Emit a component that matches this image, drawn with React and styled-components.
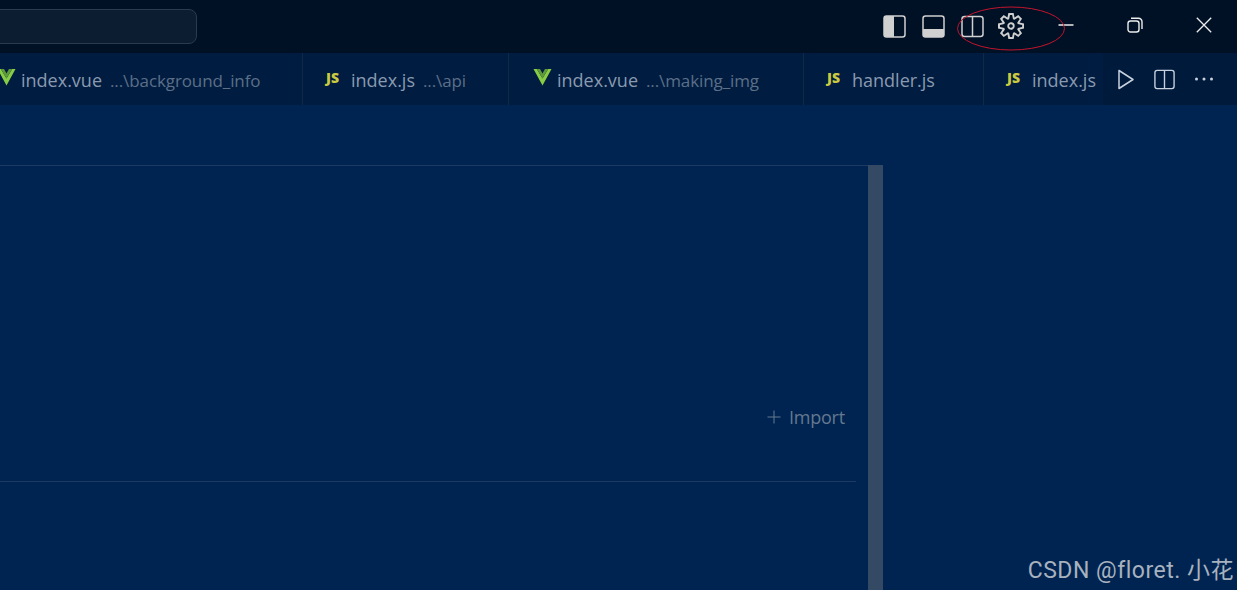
import styled, { createGlobalStyle } from "styled-components";
import { VscSettingsGear, VscEllipsis } from "react-icons/vsc";

const GlobalStyle = createGlobalStyle`
  html, body {
    margin: 0;
    padding: 0;
    height: 100%;
    overflow: hidden;
    background: #002451;
  }
  #root {
    height: 100%;
  }
`;

const Page = styled.div`
  position: relative;
  height: 590px;
  display: flex;
  flex-direction: column;
  overflow: hidden;
  background: #002451;
  font-family: "Open Sans", "Noto Sans", sans-serif;
`;

const TitleBar = styled.div`
  height: 53px;
  flex: none;
  display: flex;
  align-items: center;
  background: #001126;
`;

const SearchBox = styled.div`
  width: 215px;
  height: 33px;
  margin: -1px 0 0 -20px;
  border: 1px solid #2b3a4f;
  border-radius: 8px;
  background: #0c1c31;
`;

const LayoutIcons = styled.div`
  margin-left: auto;
  display: flex;
  color: #d0d0d0;
`;

const LayoutButton = styled.div`
  width: 39px;
  height: 53px;
  display: flex;
  align-items: center;
  justify-content: center;
  padding-bottom: ${({ $lift }) => ($lift ? "2px" : "0")};
  padding-right: ${({ $lift }) => ($lift ? "1px" : "0")};
  box-sizing: border-box;
`;

const WindowControls = styled.div`
  margin-right: -1px;
  display: flex;
  color: #ededed;
`;

const WindowButton = styled.div`
  width: 69px;
  height: 53px;
  box-sizing: border-box;
  padding-bottom: 3px;
  display: flex;
  align-items: center;
  justify-content: center;
`;

const TabRow = styled.div`
  height: 52px;
  flex: none;
  display: flex;
  background: #001c40;
`;

const TabList = styled.div`
  flex: 1;
  min-width: 0;
  display: flex;
  overflow: hidden;
  margin-left: -27px;
`;

const Tab = styled.div`
  width: ${({ $width }) => $width}px;
  flex: none;
  box-sizing: border-box;
  display: flex;
  align-items: center;
  padding: 2px 0 0 23px;
  border-right: 1px solid #0f2a47;
  font-size: 18px;
  white-space: nowrap;
`;

const TabName = styled.span`
  color: #8a9ab0;
`;

const TabPath = styled.span`
  margin-left: 8px;
  color: #5c6f88;
  font-size: 17px;
  letter-spacing: -0.1px;
`;

const JsBadge = styled.span`
  width: 25px;
  margin-top: -4px;
  color: #cbcb41;
  font-size: 14px;
  line-height: 1;
  font-weight: 800;
`;

const VueMark = styled.svg`
  width: 19px;
  height: 17px;
  margin: -5px 5px 0 1px;
  flex: none;
`;

const TabActions = styled.div`
  width: 134px;
  flex: none;
  display: flex;
  align-items: center;
  background: #001a3c;
  color: #c8d2de;
`;

const ActionButton = styled.div`
  width: 39px;
  height: 52px;
  display: flex;
  align-items: center;
  justify-content: center;
  margin-left: ${({ $first }) => ($first ? "3px" : "0")};
`;

const Editor = styled.div`
  flex: 1;
  padding-top: 60px;
  display: flex;
`;

const Panel = styled.div`
  width: 868px;
  box-sizing: border-box;
  border-top: 1px solid #1e3a61;
  padding-right: 12px;
  display: flex;
  flex-direction: column;
`;

const ImportRow = styled.div`
  margin-top: 238px;
  height: 26px;
  display: flex;
  align-items: center;
  justify-content: flex-end;
  gap: 8px;
  color: #65788f;
  font-size: 18px;
  letter-spacing: -0.2px;
  padding-right: 11px;
`;

const Divider = styled.div`
  margin-top: 51px;
  height: 1px;
  background: #1e3a61;
`;

const ScrollBar = styled.div`
  width: 15px;
  background: #344a64;
`;

const Annotation = styled.svg`
  position: absolute;
  left: 952px;
  top: 4px;
  width: 118px;
  height: 50px;
  pointer-events: none;
`;

const Watermark = styled.div`
  position: absolute;
  right: 3px;
  bottom: 5px;
  color: #a8b2bf;
  font-family: Roboto, "Noto Sans CJK SC", sans-serif;
  font-size: 23px;
  letter-spacing: 0.5px;
  white-space: nowrap;
`;

function SidebarIcon() {
  return (
    <svg width="23" height="23" viewBox="0 0 23 23" fill="none">
      <rect x="1" y="1" width="21" height="21" rx="2.5" stroke="currentColor" strokeWidth="1.5" />
      <path d="M1 3.5A2.5 2.5 0 0 1 3.5 1H11v21H3.5A2.5 2.5 0 0 1 1 19.5z" fill="currentColor" />
    </svg>
  );
}

function PanelIcon() {
  return (
    <svg width="23" height="23" viewBox="0 0 23 23" fill="none">
      <rect x="1" y="1" width="21" height="21" rx="2.5" stroke="currentColor" strokeWidth="1.5" />
      <path d="M1 14h21v5.5a2.5 2.5 0 0 1-2.5 2.5h-16A2.5 2.5 0 0 1 1 19.5z" fill="currentColor" />
    </svg>
  );
}

function SplitIcon({ size = 23 }) {
  return (
    <svg width={size} height={size} viewBox="0 0 23 23" fill="none" stroke="currentColor" strokeWidth="1.5">
      <rect x="1" y="1.5" width="21" height="20" rx="2.5" />
      <path d="M11.5 1.5v20" />
    </svg>
  );
}

function PlayIcon() {
  return (
    <svg width="18" height="21" viewBox="0 0 18 21" fill="none" stroke="currentColor" strokeWidth="1.5">
      <path d="M2 1.5v18l14-9z" strokeLinejoin="round" />
    </svg>
  );
}

function MinimizeIcon() {
  return (
    <svg width="16" height="16" viewBox="0 0 16 16" stroke="currentColor" strokeWidth="1.5">
      <path d="M0.5 8h15" />
    </svg>
  );
}

function RestoreIcon() {
  return (
    <svg width="16" height="16" viewBox="0 0 16 16" fill="none" stroke="currentColor" strokeWidth="1.4">
      <rect x="1" y="4" width="11" height="11" rx="2.5" />
      <path d="M4 1.2h7.5A3.5 3.5 0 0 1 15 4.7V12" />
    </svg>
  );
}

function CloseIcon() {
  return (
    <svg width="16" height="16" viewBox="0 0 16 16" stroke="currentColor" strokeWidth="1.3">
      <path d="M0.8 0.8l14.4 14.4M15.2 0.8L0.8 15.2" />
    </svg>
  );
}

function PlusIcon() {
  return (
    <svg width="14" height="14" viewBox="0 0 14 14" stroke="currentColor" strokeWidth="1">
      <path d="M7 0.5v13M0.5 7h13" />
    </svg>
  );
}

function VueIcon() {
  return (
    <VueMark viewBox="0 0 18 17">
      <path d="M0 0h3.4L9 9.6 14.6 0H18L9 16.5z" fill="#86cc45" />
      <path d="M3.4 0h3.1L9 4.4 11.5 0h3.1L9 9.6z" fill="#5f9a3a" />
    </VueMark>
  );
}

const tabs = [
  { name: "index.vue", path: "...\\background_info", kind: "vue", width: 330 },
  { name: "index.js", path: "...\\api", kind: "js", width: 206 },
  { name: "index.vue", path: "...\\making_img", kind: "vue", width: 295 },
  { name: "handler.js", kind: "js", width: 180 },
  { name: "index.js", kind: "js", width: 140 },
];

export default function App() {
  return (
    <Page>
      <GlobalStyle />
      <TitleBar>
        <SearchBox />
        <LayoutIcons>
          <LayoutButton>
            <SidebarIcon />
          </LayoutButton>
          <LayoutButton>
            <PanelIcon />
          </LayoutButton>
          <LayoutButton>
            <SplitIcon />
          </LayoutButton>
          <LayoutButton $lift>
            <VscSettingsGear size={26} />
          </LayoutButton>
        </LayoutIcons>
        <WindowControls>
          <WindowButton>
            <MinimizeIcon />
          </WindowButton>
          <WindowButton>
            <RestoreIcon />
          </WindowButton>
          <WindowButton>
            <CloseIcon />
          </WindowButton>
        </WindowControls>
      </TitleBar>
      <TabRow>
        <TabList>
          {tabs.map((tab, i) => (
            <Tab key={i} $width={tab.width}>
              {tab.kind === "vue" ? <VueIcon /> : <JsBadge>JS</JsBadge>}
              <TabName>{tab.name}</TabName>
              {tab.path && <TabPath>{tab.path}</TabPath>}
            </Tab>
          ))}
        </TabList>
        <TabActions>
          <ActionButton $first>
            <PlayIcon />
          </ActionButton>
          <ActionButton>
            <SplitIcon size={21} />
          </ActionButton>
          <ActionButton>
            <VscEllipsis size={24} />
          </ActionButton>
        </TabActions>
      </TabRow>
      <Editor>
        <Panel>
          <ImportRow>
            <PlusIcon />
            <span>Import</span>
          </ImportRow>
          <Divider />
        </Panel>
        <ScrollBar />
      </Editor>
      <Annotation viewBox="0 0 118 50">
        <ellipse cx="59" cy="24.5" rx="53.5" ry="21.5" fill="none" stroke="#c4142c" strokeWidth="1" />
      </Annotation>
      <Watermark>CSDN @floret. 小花</Watermark>
    </Page>
  );
}
